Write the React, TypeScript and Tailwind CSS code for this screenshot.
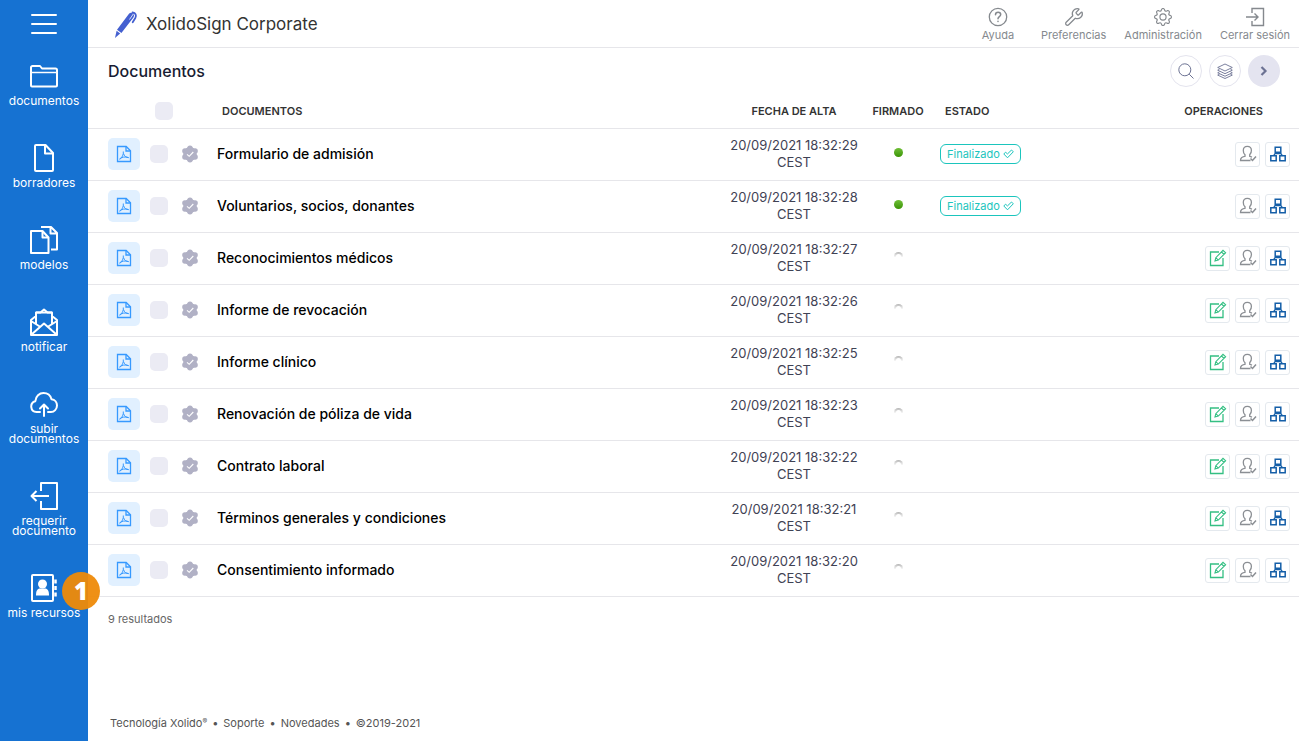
import type { ReactNode } from 'react';
import { BsGear } from 'react-icons/bs';
import { Wrench } from 'lucide-react';

const FolderIcon = () => (
  <svg width="28" height="28" viewBox="0 0 28 28" fill="none" stroke="currentColor" strokeWidth="2" strokeLinejoin="round">
    <path d="M1 23V5.5a1.5 1.5 0 0 1 1.5-1.5h7.5l2 2.5h13.5A1.5 1.5 0 0 1 27 8v15.500a1 1 0 0 1-1 1H2a1 1 0 0 1-1-1z" />
    <path d="M1.500 10.500h25" strokeWidth="1.500" />
  </svg>
);

const FileIcon = () => (
  <svg width="28" height="28" viewBox="0 0 28 28" fill="none" stroke="currentColor" strokeWidth="2" strokeLinejoin="round">
    <path d="M5 2a1 1 0 0 1 1-1h9.500l7.500 8v17a1 1 0 0 1-1 1H6a1 1 0 0 1-1-1z" />
    <path d="M15 1v8.500h8" />
  </svg>
);

const FilesIcon = () => (
  <svg width="28" height="28" viewBox="0 0 28 28" fill="none" stroke="currentColor" strokeWidth="2" strokeLinejoin="round">
    <path d="M1 5h11.500l6 6.500V27H1z" />
    <path d="M12.500 5v6.500h6" />
    <path d="M11 1h10l6 6v16.500h-6M20.500 1.500V7.500h6" />
  </svg>
);

const MailOpenIcon = () => (
  <svg width="28" height="28" viewBox="0 0 28 28" fill="none" stroke="currentColor" strokeWidth="2" strokeLinejoin="round">
    <path d="M1 12v15h26V12l-5-4v-3.500h-4.500L14 1.500l-3.500 3H6V8z" />
    <path d="M6 8v8M22 8v8M6 4.500h16" />
    <path d="M1 13l9.500 6M27 13l-9.500 6M1.500 26.500L14 15.500l12.500 11" />
  </svg>
);

const CloudIcon = () => (
  <svg width="28" height="28" viewBox="0 0 28 28" fill="none" stroke="currentColor" strokeWidth="2" strokeLinecap="round" strokeLinejoin="round">
    <path d="M10 22H6.500a5.500 5.500 0 0 1-1.200-10.800C5.600 6 9.500 3 13.500 3c4 0 7 2.500 8 6.200 3.500.3 5.500 3.100 5.500 6.300 0 3.600-2.800 6.500-6 6.500h-3" />
    <path d="M14 26V15M10 18.500l4-4 4 4" />
  </svg>
);

const RequestIcon = () => (
  <svg width="28" height="28" viewBox="0 0 28 28" fill="none" stroke="currentColor" strokeWidth="2" strokeLinejoin="round">
    <path d="M11 9V1h16v26H11v-8" />
    <path d="M19 14H1.500M6.500 9l-5 5 5 5" />
  </svg>
);

const ContactsIcon = () => (
  <svg width="28" height="28" viewBox="0 0 28 28" fill="none" stroke="currentColor" strokeWidth="2" strokeLinejoin="round">
    <rect x="2" y="1" width="21" height="26" rx="1" />
    <path d="M25.500 5.500v4M25.500 12v4M25.500 18.500v4" strokeWidth="2.500" />
    <circle cx="12.500" cy="10" r="4.500" fill="currentColor" stroke="none" />
    <path d="M6 21.500c0-5 1.500-7 4-7h5c2.500 0 4 2 4 7z" fill="currentColor" stroke="none" />
  </svg>
);

const PenLogo = () => (
  <svg width="24" height="28" viewBox="0 0 24 28" fill="#4460d0" aria-hidden="true">
    <path d="M1 27l1.600-7.200 3.600 2.800z" />
    <path d="M3 18.800L14.800 3c1-1.400 2.700-1.600 4-.7 1.400 1 1.600 2.700.6 4.100L7.400 22z" />
    <path d="M18.500 1.500c3.200.5 4.200 2.800 2.800 5.500l-2.600 4.300" fill="none" stroke="#4460d0" strokeWidth="1.800" strokeLinecap="round" />
    <path d="M15.500 8.500l3.800-5.500" stroke="#fff" strokeWidth="0.800" />
  </svg>
);

const HelpIcon = () => (
  <svg width="20" height="20" viewBox="0 0 20 20" fill="none" stroke="currentColor" strokeWidth="1.300" strokeLinecap="round">
    <circle cx="10" cy="10" r="8.700" />
    <path d="M7.500 7.700c0-3.300 5.200-3.200 5.200-.1 0 2-2.700 2-2.700 4.200M10 14.300v.3" strokeWidth="1.500" />
  </svg>
);

const ExitIcon = () => (
  <svg width="20" height="20" viewBox="0 0 20 20" fill="none" stroke="currentColor" strokeWidth="1.400">
    <path d="M7 6V1.500h11.500v17H7V14" />
    <path d="M1 10h12M9.500 6.500L13 10l-3.500 3.500" />
  </svg>
);

const SearchIcon = () => (
  <svg width="16" height="16" viewBox="0 0 16 16" fill="none" stroke="currentColor" strokeWidth="1">
    <circle cx="6.800" cy="6.800" r="6" />
    <path d="M11.200 11.200L15.500 15.500" />
  </svg>
);

const LayersIcon = () => (
  <svg width="16" height="16" viewBox="0 0 16 16" fill="none" stroke="currentColor" strokeWidth="0.900" strokeLinejoin="round">
    <path d="M8 1l7.300 3.500L8 8 .7 4.500z" />
    <path d="M2.500 6.200L.7 7.200 8 10.700l7.300-3.500-1.800-1" />
    <path d="M2.500 8.800L.7 9.800 8 13.200l7.300-3.400-1.800-1" />
    <path d="M2.500 11.200l-1.800.9L8 15.500l7.300-3.400-1.800-.9" />
  </svg>
);

const PdfIcon = () => (
  <svg width="16" height="18" viewBox="0 0 16 18" fill="none" stroke="currentColor" strokeWidth="1.300">
    <path d="M1.500 1.500h8.700l4.300 4.300v10.700h-13z" />
    <path d="M10 1.500v4.500h4.500" />
    <path d="M3.800 14.500C6 12.500 7.800 9.500 7.300 6.500M7.500 8.500c.7 2.500 2.500 4 5.200 4.200M3.500 13.800c2.500-1.800 5.500-2.300 9-1.300" strokeWidth="1" />
  </svg>
);

const SealIcon = () => (
  <svg width="16" height="18" viewBox="0 0 16 18" fill="#b1b1c5" aria-hidden="true">
    <path
      d="M8 1.800l5 3.200v8l-5 3.200L3 13V5z"
      stroke="#b1b1c5"
      strokeWidth="1.500"
    />
    <circle cx="8" cy="3.200" r="2.700" />
    <circle cx="2.900" cy="6" r="2.700" />
    <circle cx="13.100" cy="6" r="2.700" />
    <circle cx="2.900" cy="12" r="2.700" />
    <circle cx="13.100" cy="12" r="2.700" />
    <circle cx="8" cy="14.800" r="2.700" />
    <circle cx="8" cy="9" r="6.800" />
    <path d="M5 9.300l2.200 2L11.300 7" fill="none" stroke="#fff" strokeWidth="1.100" />
  </svg>
);

const EditIcon = () => (
  <svg width="18" height="18" viewBox="0 0 18 18" fill="none" stroke="#34bf83" strokeWidth="1.300">
    <path d="M10 3H1.500v13.500H14V9" />
    <path d="M6 12l.8-3.300L14 1.300l2.600 2.400-7.300 7.400zM6.800 8.700l2.500 2.400M12.500 3l2.500 2.400" strokeWidth="1.100" />
  </svg>
);

const SignerIcon = () => (
  <svg width="18" height="18" viewBox="0 0 18 18" fill="none" stroke="#8b8f94" strokeWidth="1.300">
    <path d="M11.500 15.500H1.500c0-3 1.500-3.300 4.500-4.200v-1.500C4.700 8.500 4.200 7 4.300 5.200 4.400 2.700 6 1.300 8.300 1.300s4 1.400 4.100 3.900c.1 1.800-.5 3.300-1.700 4.600v1.500l2.300.8" />
    <path d="M11.500 13.500l2 2 3.500-4" strokeWidth="1.500" />
  </svg>
);

const TreeIcon = () => (
  <svg width="18" height="18" viewBox="0 0 18 18" fill="none" stroke="#155fa8" strokeWidth="1.500">
    <path d="M6.200 2.200h5.600v5H6.200zM1.800 10.800h5.400v5H1.800zM10.800 10.800h5.400v5h-5.400z" />
    <path d="M9 7v1.500M4.500 10.800L6 8.700h6l1.500 2.100" strokeWidth="1.300" />
  </svg>
);

const CheckIcon = () => (
  <svg width="11" height="10" viewBox="0 0 11 10" fill="none" stroke="currentColor" strokeWidth="1" strokeLinejoin="round">
    <path d="M.8 5l1.700-1.800 2 1.700L8.500 1 10.300 2.800 4.500 8.800z" />
  </svg>
);

const menu: { label: ReactNode; key: string; icon: () => ReactNode }[] = [
  { key: 'documentos', label: 'documentos', icon: FolderIcon },
  { key: 'borradores', label: 'borradores', icon: FileIcon },
  { key: 'modelos', label: 'modelos', icon: FilesIcon },
  { key: 'notificar', label: 'notificar', icon: MailOpenIcon },
  { key: 'subir', label: <>subir<br />documentos</>, icon: CloudIcon },
  { key: 'requerir', label: <>requerir<br />documento</>, icon: RequestIcon },
  { key: 'recursos', label: 'mis recursos', icon: ContactsIcon },
];

const tools = [
  { label: 'Ayuda', icon: <HelpIcon /> },
  { label: 'Preferencias', icon: <Wrench size={20} strokeWidth={1.5} /> },
  { label: 'Administración', icon: <BsGear size={18} /> },
  { label: 'Cerrar sesión', icon: <ExitIcon /> },
];

const documents = [
  { name: 'Formulario de admisión', date: '20/09/2021 18:32:29', signed: true },
  { name: 'Voluntarios, socios, donantes', date: '20/09/2021 18:32:28', signed: true },
  { name: 'Reconocimientos médicos', date: '20/09/2021 18:32:27', signed: false },
  { name: 'Informe de revocación', date: '20/09/2021 18:32:26', signed: false },
  { name: 'Informe clínico', date: '20/09/2021 18:32:25', signed: false },
  { name: 'Renovación de póliza de vida', date: '20/09/2021 18:32:23', signed: false },
  { name: 'Contrato laboral', date: '20/09/2021 18:32:22', signed: false },
  { name: 'Términos generales y condiciones', date: '20/09/2021 18:32:21', signed: false },
  { name: 'Consentimiento informado', date: '20/09/2021 18:32:20', signed: false },
];

const checkboxClass = 'block size-[18px] appearance-none rounded-[5px] bg-[#ebebf4] checked:bg-[#1672d2]';
const opClass = 'flex size-[25px] items-center justify-center rounded-[3px] border border-[#e4e9ee] bg-white';

function Sidebar() {
  return (
    <aside className="flex w-[88px] shrink-0 flex-col items-center bg-[#1672d2] text-white">
      <button type="button" aria-label="Menú" className="mt-3 mb-[26px] h-6">
        <svg width="28" height="24" viewBox="0 0 28 24" stroke="currentColor" strokeWidth="2" strokeLinecap="round">
          <path d="M2 3h24M2 12h24M2 21h24" />
        </svg>
      </button>
      <nav className="flex w-full flex-col gap-[38px]">
        {menu.map(({ key, label, icon: Icon }) => (
          <a key={key} href="#" className="relative flex flex-col items-center gap-1.5 text-center text-[12px] leading-[10px]">
            <Icon />
            <span className="whitespace-nowrap">{label}</span>
            {key === 'recursos' && (
              <span className="absolute -top-0.5 left-[62px] flex size-[38px] items-center justify-center rounded-full bg-[#ee8a08]/95 font-['Open_Sans',sans-serif] text-2xl font-extrabold">
                1
              </span>
            )}
          </a>
        ))}
      </nav>
    </aside>
  );
}

function TopBar() {
  return (
    <header className="flex h-12 items-center justify-between border-b border-[#e6e6ea] pt-0.5 pr-[9px] pl-[26px]">
      <div className="flex items-center gap-2">
        <PenLogo />
        <span className="text-[17px] text-[#333]">XolidoSign Corporate</span>
      </div>
      <nav className="flex gap-[18px]">
        {tools.map((tool) => (
          <a key={tool.label} href="#" className="flex min-w-[50px] flex-col items-center text-[11px] leading-4 text-[#85898e]">
            <span className="flex h-5 items-center">{tool.icon}</span>
            {tool.label}
          </a>
        ))}
      </nav>
    </header>
  );
}

function DocumentTable() {
  return (
    <table className="w-full table-fixed border-collapse text-left">
      <colgroup>
        <col className="w-[62px]" />
        <col className="w-8" />
        <col className="w-[35px]" />
        <col />
        <col className="w-[134px]" />
        <col className="w-[74px]" />
        <col className="w-[214px]" />
        <col className="w-[150px]" />
      </colgroup>
      <thead>
        <tr className="h-[34px] border-b border-[#e6e6ea] text-[11px] text-[#333]">
          <td />
          <td className="pl-[5px]">
            <input type="checkbox" aria-label="Seleccionar todos" className={checkboxClass} />
          </td>
          <td />
          <th className="pl-[5px] font-semibold">DOCUMENTOS</th>
          <th className="text-center font-semibold">FECHA DE ALTA</th>
          <th className="text-center font-semibold">FIRMADO</th>
          <th className="pl-2.5 font-semibold">ESTADO</th>
          <th className="pr-9 text-right font-semibold">OPERACIONES</th>
        </tr>
      </thead>
      <tbody>
        {documents.map((doc) => (
          <tr key={doc.name} className="h-[52px] border-b border-[#e6e6ea]">
            <td className="pl-5">
              <button type="button" aria-label={`Abrir ${doc.name}`} className="flex size-8 items-center justify-center rounded-[5px] bg-[#e1f0ff] text-[#3699ff]">
                <PdfIcon />
              </button>
            </td>
            <td>
              <input type="checkbox" aria-label={`Seleccionar ${doc.name}`} className={checkboxClass} />
            </td>
            <td>
              <SealIcon />
            </td>
            <td className="pb-px text-[14px] font-medium text-black">{doc.name}</td>
            <td className="text-center text-[13px] leading-[17px] text-[#3f4254]">
              {doc.date}
              <br />
              CEST
            </td>
            <td className="pb-1">
              {doc.signed ? (
                <span className="mx-auto block size-[9px] rounded-full bg-linear-to-b from-[#6fbf35] to-[#3a9400]" />
              ) : (
                <span className="mx-auto block size-[9px] rounded-full bg-linear-to-b from-[#b4b4b4] to-white to-60% p-0.5">
                  <span className="block size-[5px] rounded-full bg-white" />
                </span>
              )}
            </td>
            <td className="pl-[5px]">
              {doc.signed && (
                <span className="flex h-5 w-fit items-center gap-[3px] rounded-md border border-[#1bc5bd] px-1.5 text-[11px] text-[#1bc5bd]">
                  Finalizado
                  <CheckIcon />
                </span>
              )}
            </td>
            <td>
              <div className="flex justify-end gap-[5px] pr-[9px]">
                {!doc.signed && (
                  <button type="button" aria-label="Editar" className={opClass}>
                    <EditIcon />
                  </button>
                )}
                <button type="button" aria-label="Firmantes" className={opClass}>
                  <SignerIcon />
                </button>
                <button type="button" aria-label="Flujo" className={opClass}>
                  <TreeIcon />
                </button>
              </div>
            </td>
          </tr>
        ))}
      </tbody>
    </table>
  );
}

export default function App() {
  return (
    <div className="flex min-h-screen bg-white font-['Inter',sans-serif]">
      <Sidebar />
      <div className="flex min-w-0 flex-1 flex-col">
        <TopBar />
        <main className="flex-1">
          <div className="flex h-[46px] items-center justify-between pr-[19px] pl-5">
            <h1 className="text-base font-medium text-[#181c32]">Documentos</h1>
            <div className="flex gap-[7px] text-[#6c7293]">
              <button type="button" aria-label="Buscar" className="flex size-8 items-center justify-center rounded-full border border-[#e4e4ee]">
                <SearchIcon />
              </button>
              <button type="button" aria-label="Capas" className="flex size-8 items-center justify-center rounded-full border border-[#e4e4ee]">
                <LayersIcon />
              </button>
              <button type="button" aria-label="Siguiente" className="flex size-8 items-center justify-center rounded-full bg-[#e4e4f0]">
                <svg width="8" height="10" viewBox="0 0 8 10" fill="none" stroke="currentColor" strokeWidth="2.200">
                  <path d="M1.500 1l4 4-4 4" />
                </svg>
              </button>
            </div>
          </div>
          <DocumentTable />
          <p className="mt-3.5 pl-5 text-[11px] leading-4 text-[#666]">9 resultados</p>
        </main>
        <footer className="flex gap-[5px] pb-2.5 pl-[22px] text-[11px] leading-4 text-[#555]">
          <a href="#">
            Tecnología Xolido<sup className="text-[7px]">®</sup>
          </a>
          <span>•</span>
          <a href="#">Soporte</a>
          <span>•</span>
          <a href="#">Novedades</a>
          <span>•</span>
          <span>©2019-2021</span>
        </footer>
      </div>
    </div>
  );
}
